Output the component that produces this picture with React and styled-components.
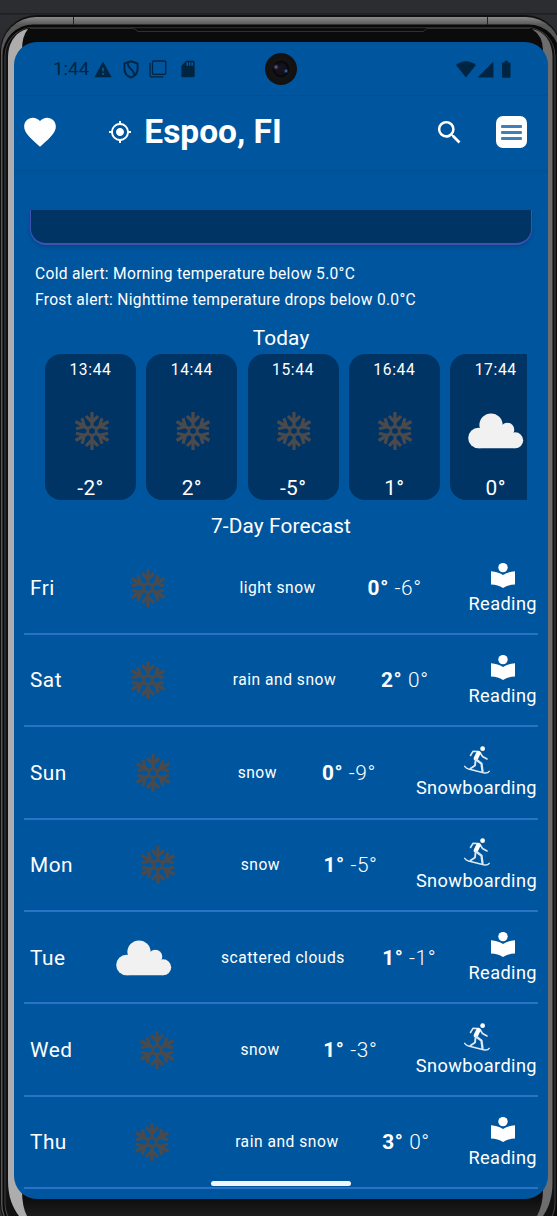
import React from "react";
import styled, { createGlobalStyle } from "styled-components";
import {
  MdFavorite, MdMyLocation, MdSearch, MdSignalCellular4Bar,
  MdBatteryFull, MdSdCard,
} from "react-icons/md";

const Global = createGlobalStyle`
  * { box-sizing: border-box; }
  html, body { margin: 0; background: #2b2d30; overflow: hidden; }
  body { font-family: Roboto, "Liberation Sans", sans-serif; color: #fff; }
  svg { display: block; flex: none; }
`;

const Desk = styled.div`
  position: relative;
  width: 557px;
  height: 1216px;
  overflow: hidden;
  padding: 42px 9px 17px 14px;
`;

const FrameArt = styled.svg`
  position: absolute;
  inset: 0;
`;

const Screen = styled.main`
  position: relative;
  width: 534px;
  height: 1157px;
  background: #00569e;
  border-radius: 23px;
  overflow: hidden;
  display: flex;
  flex-direction: column;
`;

const StatusBar = styled.div`
  height: 54px;
  flex: none;
  display: flex;
  align-items: center;
  padding: 1px 31.5px 0 39px;
  color: #002542;
  border-bottom: 1px solid #005193;
`;

const Clock = styled.span`
  font-size: 18.8px;
  width: 41px;
  white-space: nowrap;
`;

const StatusIcons = styled.div`
  display: flex;
  align-items: center;
  gap: ${(p) => p.$gap}px;
  margin-left: ${(p) => p.$left || 0};
`;

const Camera = styled.div`
  position: absolute;
  left: 251px;
  top: 11px;
  width: 32px;
  height: 32px;
  border-radius: 50%;
  background:
    radial-gradient(circle at 11px 14px, #9a8fae 0, #4b3d5c 1px, transparent 3px),
    radial-gradient(circle at 21px 18px, #4d9ad0 0, #1c3a66 1.2px, transparent 2.5px),
    radial-gradient(circle at 16px 16px, #15131f 0, #11101a 6px, #050505 7px, #141414 9px, #111 16px);
`;

const AppBar = styled.header`
  height: 73px;
  flex: none;
  display: flex;
  align-items: center;
  padding: 0 21px 1px 7px;
`;

const BarShadow = styled.div`
  height: 41px;
  flex: none;
  background: linear-gradient(#005194, #00569e 7px);
`;

const City = styled.h1`
  margin: 0 0 0 12px;
  font-size: 33.5px;
  font-weight: 700;
  line-height: 40px;
  flex: 1;
`;

const MenuButton = styled.div`
  width: 31px;
  height: 32px;
  margin-left: 31.5px;
  border-radius: 7px;
  background: #fff;
  display: flex;
  flex-direction: column;
  align-items: center;
  justify-content: center;
  gap: 3px;
`;

const MenuLine = styled.span`
  width: 21px;
  height: 3px;
  border-radius: 1px;
  background: #3f80b8;
`;

const CurrentCard = styled.section`
  height: 34.5px;
  flex: none;
  margin: 0 16px 0 16px;
  background: #003465;
  border: 1.5px solid #3f51b5;
  border-bottom-width: 2px;
  border-top: 0;
  border-radius: 0 0 16px 16px;
  box-shadow: 0 2px 4px rgba(0, 30, 80, 0.25);
`;

const Alerts = styled.div`
  padding: 16px 0 0 21px;
  font-size: 15.6px;
  line-height: 26px;
  letter-spacing: 0.3px;
  height: 81.5px;
  flex: none;
`;

const SectionTitle = styled.h2`
  margin: 0;
  height: ${(p) => p.$h}px;
  padding-top: ${(p) => p.$top || 0}px;
  flex: none;
  text-align: center;
  font-size: 20.8px;
  font-weight: 400;
  line-height: 24px;
  letter-spacing: 0.15px;
`;

const Hours = styled.div`
  display: flex;
  flex: none;
  gap: 10.3px;
  margin: 0 21px 0 31px;
  overflow: hidden;
`;

const HourCard = styled.article`
  width: 91px;
  height: 146px;
  flex: none;
  border-radius: 16px;
  background: #003465;
  display: flex;
  flex-direction: column;
  align-items: center;
  justify-content: space-between;
  padding: 6px 0 0;
`;

const HourTime = styled.span`
  font-size: 15.6px;
  line-height: 20px;
  letter-spacing: 0.65px;
`;

const HourTemp = styled.span`
  font-size: 20.8px;
  line-height: 24px;
  letter-spacing: 0.4px;
`;

const HourIcon = styled.div`
  height: 47px;
  display: flex;
  align-items: center;
  padding: 6px 0 0 ${(p) => (p.$kind === "snow" ? 2 : 1)}px;
`;

const Days = styled.div`
  display: flex;
  flex-direction: column;
  margin: 0 10px;
`;

const DayRow = styled.div`
  height: 92.4px;
  flex: none;
  border-bottom: 2px solid #2a72c6;
  display: flex;
  align-items: center;
  justify-content: space-between;
  padding: 1px 1px 0 6px;
`;

const DayName = styled.span`
  font-size: 20.8px;
  letter-spacing: 0.5px;
`;

const DayIcon = styled.div`
  width: 91px;
  display: flex;
  justify-content: center;
  padding-left: 2px;
`;

const Description = styled.span`
  font-size: 15.6px;
  letter-spacing: 0.52px;
  margin-right: 5px;
`;

const Temps = styled.span`
  font-size: 20.8px;
  letter-spacing: 0.6px;
  font-weight: 300;
  b { font-weight: 700; }
`;

const Activity = styled.div`
  display: flex;
  flex-direction: column;
  align-items: center;
  font-size: 18.2px;
  line-height: 22px;
  letter-spacing: 0.4px;
`;

const ActivityIcon = styled.div`
  height: 31px;
  display: flex;
  align-items: center;
  padding: 0 0 4px 1px;
`;

const HomePill = styled.div`
  position: absolute;
  left: 197px;
  top: 1139px;
  width: 140px;
  height: 5px;
  border-radius: 3px;
  background: #f0f5fa;
`;

function Snowflake() {
  return (
    <svg width="36" height="40" viewBox="-18 -20 36 40" fill="none" stroke="#4a4a4c" strokeWidth="3.2">
      <path d="M0-4.800 4.200-2.400V2.400L0 4.800-4.200 2.400V-2.400Z" strokeWidth="2.800" />
      {[0, 60, 120, 180, 240, 300].map((a) => (
        <path key={a} transform={`rotate(${a})`} d="M0-4V-19M-6-15 0-8.600 6-15" />
      ))}
    </svg>
  );
}

function Cloud() {
  return (
    <svg width="56" height="36" viewBox="0 0 56 36" fill="#f1f1f1">
      <circle cx="10.500" cy="25" r="10.300" />
      <circle cx="23" cy="12" r="11.600" />
      <circle cx="39.300" cy="16.800" r="7" />
      <circle cx="47.200" cy="27.300" r="8" />
      <path d="M10.500 20 20 12H34.500L44 20 47.200 22V35.300H10.500Z" />
    </svg>
  );
}

function Reader() {
  return (
    <svg width="26" height="27" viewBox="0 0 26 27" fill="#fff">
      <circle cx="13" cy="5.600" r="4.700" />
      <path d="M1 9.200Q8 9.700 13 13 18 9.700 25 9.200V22.500Q18 22.700 13 26 8 22.700 1 22.500Z" />
    </svg>
  );
}

function Snowboarder() {
  return (
    <svg width="26" height="30" viewBox="0 0 26 30" fill="none" stroke="#dce9f5" strokeLinecap="round" strokeLinejoin="round">
      <circle cx="18.600" cy="3.700" r="2.400" fill="#fff" stroke="none" />
      <path d="M13.500 6.500 9 6.300 6.500 10.500" strokeWidth="1.600" />
      <path d="M16 7.500 18.500 11.500 23 14" strokeWidth="1.600" />
      <path d="M14.500 8 11.800 13.500" stroke="#fff" strokeWidth="4.400" />
      <path d="M12 14.500 17.500 18.700 18.500 26.300" strokeWidth="2.300" />
      <path d="M11.500 16 11 20.500 6.500 23.500" strokeWidth="1.900" />
      <path d="M.7 21.300Q2 23.300 4.500 24L19.500 27.800Q23.800 28.500 25.200 26.300" strokeWidth="1.400" />
    </svg>
  );
}

function Warning() {
  return (
    <svg width="18" height="17" viewBox="0 0 18 17" fill="#002542">
      <path fillRule="evenodd" d="M9 .5 17.700 16.200H.3ZM8.100 6.500V10.500H9.900V6.500ZM8.100 12V13.900H9.900V12Z" />
    </svg>
  );
}

function ShieldOff() {
  return (
    <svg width="16" height="19" viewBox="0 0 16 19" fill="none" stroke="#002542" strokeWidth="2">
      <path d="M8 1.200 14.600 3.500V8.500C14.600 12.800 11.800 16.200 8 17.500 4.200 16.200 1.400 12.800 1.400 8.500V3.500Z" />
      <path d="M5 3C3.500 8 12 9.500 11 15.500" />
    </svg>
  );
}

function Layers() {
  return (
    <svg width="18" height="18" viewBox="0 0 18 18" fill="none" stroke="#002542" strokeWidth="1.300">
      <rect x="3.500" y="1" width="13.300" height="13.300" rx="1" />
      <path d="M1 3V15.500Q1 16.800 2.300 16.800H14.500" />
    </svg>
  );
}

function Wifi() {
  return (
    <svg width="20" height="17" viewBox="0 0 20 17" fill="#002542">
      <path d="M0 4Q10-3.500 20 4L10 16.500Z" />
    </svg>
  );
}

function PhoneFrame() {
  return (
    <FrameArt width="557" height="1216" viewBox="0 0 557 1216" aria-hidden="true">
      <defs>
        <linearGradient id="rim" x1="0" y1="17" x2="0" y2="25" gradientUnits="userSpaceOnUse">
          <stop offset="0" stopColor="#8a8a8a" />
          <stop offset="1" stopColor="#565656" />
        </linearGradient>
        <linearGradient id="chin" x1="0" y1="1195" x2="0" y2="1216" gradientUnits="userSpaceOnUse">
          <stop offset="0" stopColor="#0b0b0b" />
          <stop offset="1" stopColor="#1d1d1e" />
        </linearGradient>
      </defs>
      <rect width="557" height="13" fill="#2b2d31" />
      <rect y="13" width="557" height="1.500" fill="#1e1f22" />
      <rect x="0" y="15" width="562" height="1225" rx="37" fill="#101010" />
      <rect x="1" y="17" width="560" height="1221" rx="35" fill="url(#rim)" />
      <rect x="2.500" y="24.500" width="557" height="1211" rx="31" fill="#090909" />
      <rect x="4.500" y="27" width="551" height="1206" rx="29" fill="#444" />
      <rect x="5.500" y="27.500" width="549" height="1204" rx="28" fill="#111" />
      <path d="M28 29C17 31 8 41 8 58V1180C8 1198 13 1208 19 1216H40V29Z" fill="#adadad" />
      <path d="M530 29C544 30 552.500 41 552.500 58V1183C552.500 1200 547 1210 543 1216H525V29Z" fill="#6d6d6d" />
      <path d="M28 29Q22 36 22 50V1190Q22 1207 27 1216H537Q543 1205 543 1190V50Q543 36 532 29Z" fill="url(#chin)" />
      <path d="M30 28.500H134L138 31.500H423L427 28.500H530" fill="none" stroke="#303030" strokeWidth="1" />
      <path d="M73.500 17V25M487.500 17V25" stroke="#222" />
    </FrameArt>
  );
}

const hours = [
  ["13:44", "snow", "-2°"], ["14:44", "snow", "2°"], ["15:44", "snow", "-5°"],
  ["16:44", "snow", "1°"], ["17:44", "cloud", "0°"],
];

const days = [
  ["Fri", "snow", "light snow", "0°", "-6°", "Reading"],
  ["Sat", "snow", "rain and snow", "2°", "0°", "Reading"],
  ["Sun", "snow", "snow", "0°", "-9°", "Snowboarding"],
  ["Mon", "snow", "snow", "1°", "-5°", "Snowboarding"],
  ["Tue", "cloud", "scattered clouds", "1°", "-1°", "Reading"],
  ["Wed", "snow", "snow", "1°", "-3°", "Snowboarding"],
  ["Thu", "snow", "rain and snow", "3°", "0°", "Reading"],
];

const WeatherIcon = ({ kind }) => (kind === "snow" ? <Snowflake /> : <Cloud />);

export default function App() {
  return (
    <Desk>
      <Global />
      <PhoneFrame />
      <Screen>
        <StatusBar>
          <Clock>1:44</Clock>
          <StatusIcons $gap={10.5}>
            <Warning />
            <ShieldOff />
            <Layers />
            <MdSdCard size={20} />
          </StatusIcons>
          <StatusIcons $gap={0.6} $left="auto">
            <Wifi />
            <MdSignalCellular4Bar size={19} />
            <MdBatteryFull size={20.5} />
          </StatusIcons>
        </StatusBar>
        <Camera />
        <AppBar>
          <MdFavorite size={38} />
          <StatusIcons $left="49.3px"><MdMyLocation size={24} /></StatusIcons>
          <City>Espoo, FI</City>
          <MdSearch size={31} />
          <MenuButton><MenuLine /><MenuLine /><MenuLine /></MenuButton>
        </AppBar>
        <BarShadow />
        <CurrentCard />
        <Alerts>
          <div>Cold alert: Morning temperature below 5.0°C</div>
          <div>Frost alert: Nighttime temperature drops below 0.0°C</div>
        </Alerts>
        <SectionTitle $h={28}>Today</SectionTitle>
        <Hours>
          {hours.map(([time, kind, temp]) => (
            <HourCard key={time}>
              <HourTime>{time}</HourTime>
              <HourIcon $kind={kind}><WeatherIcon kind={kind} /></HourIcon>
              <HourTemp>{temp}</HourTemp>
            </HourCard>
          ))}
        </Hours>
        <SectionTitle $h={42.4} $top={14}>7-Day Forecast</SectionTitle>
        <Days>
          {days.map(([day, kind, text, high, low, act]) => (
            <DayRow key={day}>
              <DayName>{day}</DayName>
              <DayIcon><WeatherIcon kind={kind} /></DayIcon>
              <Description>{text}</Description>
              <Temps><b>{high}</b> {low}</Temps>
              <Activity>
                <ActivityIcon>
                  {act === "Reading" ? <Reader /> : <Snowboarder />}
                </ActivityIcon>
                {act}
              </Activity>
            </DayRow>
          ))}
        </Days>
        <HomePill />
      </Screen>
    </Desk>
  );
}
